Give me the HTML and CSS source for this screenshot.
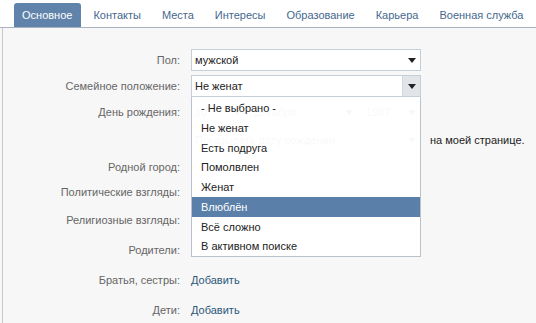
FILE: index.html
```html
<!DOCTYPE html>
<html lang="ru">
<head>
  <meta charset="UTF-8">
  <title>Редактирование страницы</title>
  <link rel="stylesheet" href="styles.css">
</head>
<body>
  <div class="tabs">
    <span class="tab active">Основное</span>
    <span class="tab">Контакты</span>
    <span class="tab">Места</span>
    <span class="tab">Интересы</span>
    <span class="tab">Образование</span>
    <span class="tab">Карьера</span>
    <span class="tab">Военная служба</span>
  </div>

  <div class="content">
    <div class="row">
      <div class="label">Пол:</div>
      <div class="field">
        <div class="select"><span>мужской</span><i class="arrow"></i></div>
      </div>
    </div>

    <div class="row">
      <div class="label">Семейное положение:</div>
      <div class="field">
        <div class="select open"><span>Не женат</span><i class="arrow"></i></div>
        <ul class="dropdown">
          <li>- Не выбрано -</li>
          <li>Не женат</li>
          <li>Есть подруга</li>
          <li>Помолвлен</li>
          <li>Женат</li>
          <li class="hover">Влюблён</li>
          <li>Всё сложно</li>
          <li>В активном поиске</li>
        </ul>
      </div>
    </div>

    <div class="row row-28">
      <div class="label">День рождения:</div>
      <div class="field birthday">
        <div class="select day"><span>10</span><i class="arrow"></i></div>
        <div class="select month"><span>декабря</span><i class="arrow"></i></div>
        <div class="select year"><span>1987</span><i class="arrow"></i></div>
      </div>
    </div>

    <div class="row row-27">
      <div class="label"></div>
      <div class="field">
        <div class="select"><span>Показывать дату рождения</span><i class="arrow"></i></div>
      </div>
      <div class="note">на моей странице.</div>
    </div>

    <div class="row row-25">
      <div class="label">Родной город:</div>
      <div class="field"></div>
    </div>

    <div class="row row-28">
      <div class="label">Политические взгляды:</div>
      <div class="field"></div>
    </div>

    <div class="row row-30">
      <div class="label">Религиозные взгляды:</div>
      <div class="field"></div>
    </div>

    <div class="row row-30">
      <div class="label">Родители:</div>
      <div class="field"></div>
    </div>

    <div class="row row-30">
      <div class="label">Братья, сестры:</div>
      <div class="field"><a class="link" href="#">Добавить</a></div>
    </div>

    <div class="row">
      <div class="label">Дети:</div>
      <div class="field"><a class="link" href="#">Добавить</a></div>
    </div>
  </div>
</body>
</html>
```

FILE: styles.css
```css
body {
  margin: 0;
  padding: 0;
  background: #f7f7f7;
  font-family: 'Liberation Sans', Arial, sans-serif;
  font-size: 11px;
  color: #222;
  overflow: hidden;
}

.tabs {
  display: flex;
  align-items: flex-end;
  height: 27px;
  padding-left: 14px;
  background: #fff;
  border-bottom: 1px solid #a9b3bf;
}

.tab {
  height: 24px;
  line-height: 24px;
  padding: 0 9px 0 8px;
  margin-right: 4px;
  color: #45688e;
  white-space: nowrap;
}

.tab.active {
  background: #5f83aa;
  color: #fff;
  border-radius: 3px 3px 0 0;
}

.content {
  box-sizing: border-box;
  margin-left: 2px;
  border-left: 1px solid #c9c9c9;
  padding-top: 21px;
  height: calc(100vh - 28px);
}

.row {
  display: flex;
  align-items: flex-start;
  height: 26px;
}

.row-25 { height: 25px; }
.row-27 { height: 27px; }
.row-28 { height: 28px; }
.row-30 { height: 30px; }

.label {
  width: 177px;
  flex: none;
  text-align: right;
  color: #666;
  line-height: 22px;
  padding-right: 11px;
}

.field {
  position: relative;
  width: 230px;
  flex: none;
  display: flex;
  gap: 4px;
  line-height: 22px;
}

.select {
  flex: 1;
  display: flex;
  align-items: center;
  justify-content: space-between;
  height: 20px;
  padding-left: 3px;
  background: #fff;
  border: 1px solid #c6ced7;
  color: #222;
}

.arrow {
  width: 17px;
  height: 20px;
  display: flex;
  align-items: center;
  justify-content: center;
}

.arrow::after {
  content: '';
  border-left: 4px solid transparent;
  border-right: 4px solid transparent;
  border-top: 5px solid #222;
}

.select.open .arrow {
  background: #e1e5ea;
  border-left: 1px solid #d3d9e0;
}

.birthday .day { flex: 0 0 50px; }
.birthday .year { flex: 0 0 54px; }

.note {
  margin-left: 9px;
  line-height: 22px;
  white-space: nowrap;
}

.dropdown {
  position: absolute;
  top: 22px;
  left: 0;
  z-index: 2;
  width: 228px;
  margin: 0;
  padding: 1px 0 0;
  list-style: none;
  background: rgba(255, 255, 255, 0.97);
  border: 1px solid #b9c2cc;
  border-top: none;
}

.dropdown li {
  height: 19.75px;
  line-height: 20px;
  padding-left: 9px;
  color: #222;
}

.dropdown li.hover {
  background: #5a7fa8;
  color: #fff;
}

.link {
  color: #2b587a;
  text-decoration: none;
}
```
